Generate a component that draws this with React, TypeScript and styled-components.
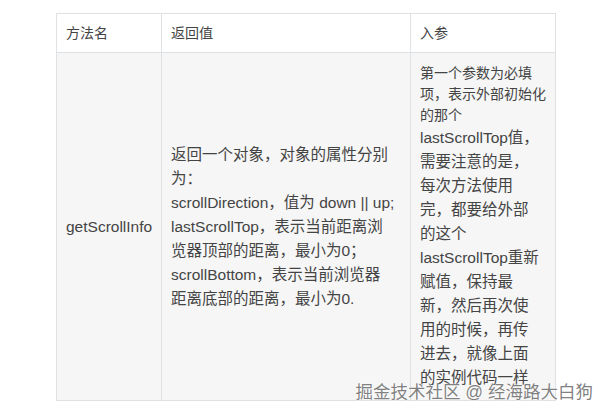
import styled, { createGlobalStyle } from 'styled-components'

const GlobalStyle = createGlobalStyle`
  body {
    margin: 0;
    background: #ffffff;
    font-family: "Liberation Sans", "Noto Sans CJK SC", sans-serif;
  }
`

const App = () => {
  return (
    <Page>
      <GlobalStyle />
      <Table>
        <colgroup>
          <col style={{ width: 105 }} />
          <col style={{ width: 249 }} />
          <col style={{ width: 145 }} />
        </colgroup>
        <thead>
          <tr>
            <HeadCell>方法名</HeadCell>
            <HeadCell>返回值</HeadCell>
            <HeadCell>入参</HeadCell>
          </tr>
        </thead>
        <tbody>
          <tr>
            <Cell>getScrollInfo</Cell>
            <Cell>
              返回一个对象，对象的属性分别<br />
              为：<br />
              scrollDirection，值为 down || up;<br />
              lastScrollTop，表示当前距离浏<br />
              览器顶部的距离，最小为0；<br />
              scrollBottom，表示当前浏览器<br />
              距离底部的距离，最小为0.
            </Cell>
            <Cell>
              <Small>
                第一个参数为必填<br />
                项，表示外部初始化<br />
                的那个
              </Small>
              lastScrollTop值，<br />
              需要注意的是，<br />
              每次方法使用<br />
              完，都要给外部<br />
              的这个<br />
              lastScrollTop重新<br />
              赋值，保持最<br />
              新，然后再次使<br />
              用的时候，再传<br />
              进去，就像上面<br />
              的实例代码一样
            </Cell>
          </tr>
        </tbody>
      </Table>
      <Watermark>掘金技术社区 @ 经海路大白狗</Watermark>
    </Page>
  )
}

const Page = styled.div`
  position: relative;
  width: 605px;
  height: 414px;
  overflow: hidden;
  padding: 13px 0 0 56px;
  box-sizing: border-box;
`
const Table = styled.table`
  border-collapse: collapse;
  table-layout: fixed;
  width: 500px;
  color: #444444;
`
const HeadCell = styled.th`
  height: 38px;
  padding: 0 9px;
  border: 1px solid #dfe2e5;
  background: #ffffff;
  text-align: left;
  font-weight: 400;
  font-size: 14px;
  line-height: 20px;
`
const Cell = styled.td`
  height: 345px;
  padding: 10px 9px;
  border: 1px solid #dfe2e5;
  background: #f6f6f6;
  font-size: 15.5px;
  line-height: 24px;
  white-space: nowrap;
  vertical-align: middle;
  box-sizing: border-box;
`
const Small = styled.div`
  font-size: 14px;
  line-height: 21px;
`
const Watermark = styled.div`
  position: absolute;
  right: 12px;
  bottom: 10px;
  font-size: 17.5px;
  line-height: 24px;
  color: rgba(105, 105, 105, 0.85);
  text-shadow: 0 0 2px #ffffff, 0 0 1px #ffffff;
  white-space: nowrap;
`

export default App
